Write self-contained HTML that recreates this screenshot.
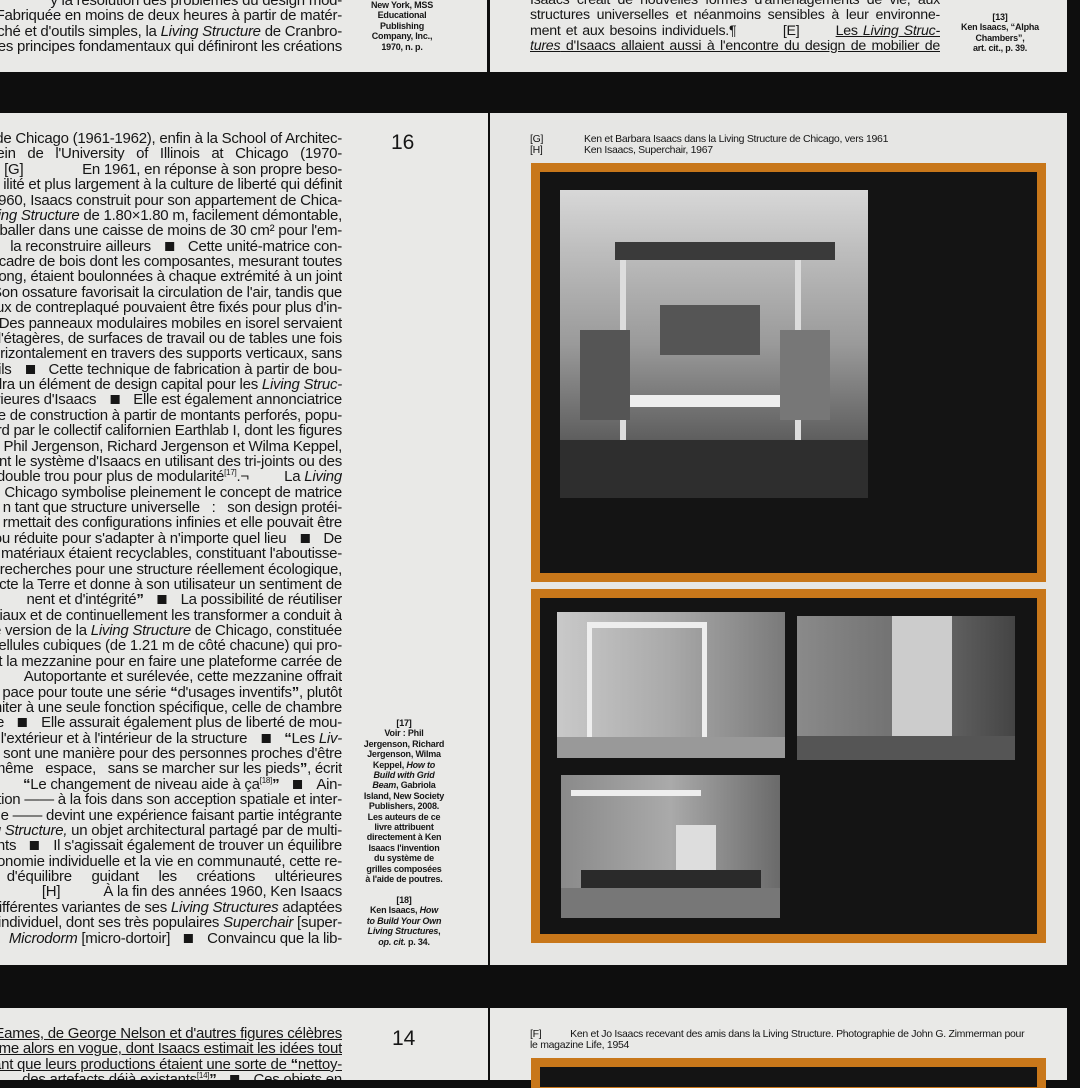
<!DOCTYPE html>
<html><head><meta charset="utf-8"><style>
*{margin:0;padding:0;box-sizing:border-box}
body{width:1080px;height:1080px;background:#0e0e0e;position:relative;overflow:hidden;font-family:"Liberation Sans",sans-serif;color:#161616}
.pg{position:absolute;background:#e9e9e7}
.col{position:absolute;overflow:hidden}
.col div{white-space:nowrap;font-size:15px;letter-spacing:-0.25px;height:15.38px;line-height:15.38px;width:max-content;position:relative;left:100%;transform:translateX(-100%)}
.col.j div{width:auto;left:0;transform:none;text-align:justify;text-align-last:justify;font-size:14.2px}
sup{font-size:8px;line-height:0;vertical-align:baseline;position:relative;top:-6px}
.sq{display:inline-block;width:9px;height:9px;background:#161616;margin:0 14px}
.note{position:absolute;font-size:9px;font-weight:bold;text-align:center;line-height:10.4px;letter-spacing:-0.2px}
.or{position:absolute;background:#c8771a}
.bk{position:absolute;background:#141414}
.ph{position:absolute;background:#8a8a8a;overflow:hidden}
.u{text-decoration:underline}
</style></head><body>
<!-- top strip -->
<div class="pg" style="left:0;top:0;width:487px;height:72px"></div>
<div class="pg" style="left:490px;top:0;width:577px;height:72px"></div>
<div class="col" style="left:0;top:0;width:342px;height:56px">
<div style="margin-top:-7px">y la résolution des problèmes du design mod-</div>
<div>Fabriquée en moins de deux heures à partir de matér-</div>
<div>arché et d'outils simples, la <i>Living Structure</i> de Cranbro-</div>
<div>les principes fondamentaux qui définiront les créations</div>
</div>
<div class="note" style="left:360px;top:0;width:84px">New York, MSS<br>Educational<br>Publishing<br>Company, Inc.,<br>1970, n. p.</div>
<div class="col j" style="left:530px;top:0;width:410px;height:56px">
<div style="margin-top:-7px">Isaacs créait de nouvelles formes d'aménagements de vie, aux</div>
<div>structures universelles et néanmoins sensibles à leur environne-</div>
<div>ment et aux besoins individuels.¶ &nbsp; &nbsp; &nbsp; &nbsp; [E] &nbsp; &nbsp; &nbsp; <span class="u">Les <i>Living Struc-</i></span></div>
<div class="u"><i>tures</i> d'Isaacs allaient aussi à l'encontre du design de mobilier de</div>
</div>
<div class="note" style="left:952px;top:12px;width:96px">[13]<br>Ken Isaacs, “Alpha<br>Chambers”,<br>art. cit., p. 39.</div>

<!-- middle spread -->
<div class="pg" style="left:0;top:113px;width:488px;height:852px"></div>
<div class="pg" style="left:490px;top:113px;width:577px;height:852px;background:#e6e6e4"></div>
<div style="position:absolute;left:391px;top:131px;font-size:21px">16</div>
<div class="col" style="left:0;top:131px;width:342px;height:820px">
<div>ty de Chicago (1961-1962), enfin à la School of Architec-</div>
<div>sein &nbsp; de &nbsp; l'University &nbsp; of &nbsp; Illinois &nbsp; at &nbsp; Chicago &nbsp; (1970-</div>
<div>[G] &nbsp; &nbsp; &nbsp; &nbsp; &nbsp; &nbsp; &nbsp; En 1961, en réponse à son propre beso-</div>
<div>ilité et plus largement à la culture de liberté qui définit</div>
<div>s 1960, Isaacs construit pour son appartement de Chica-</div>
<div><i>iving Structure</i> de 1.80×1.80 m, facilement démontable,</div>
<div>t emballer dans une caisse de moins de 30 cm² pour l'em-</div>
<div>la reconstruire ailleurs<span class="sq"></span>Cette unité-matrice con-</div>
<div>un cadre de bois dont les composantes, mesurant toutes</div>
<div>long, étaient boulonnées à chaque extrémité à un joint</div>
<div>Son ossature favorisait la circulation de l'air, tandis que</div>
<div>eaux de contreplaqué pouvaient être fixés pour plus d'in-</div>
<div>é &nbsp; &nbsp; Des panneaux modulaires mobiles en isorel servaient</div>
<div>d'étagères, de surfaces de travail ou de tables une fois</div>
<div>orizontalement en travers des supports verticaux, sans</div>
<div>uils<span class="sq"></span>Cette technique de fabrication à partir de bou-</div>
<div>endra un élément de design capital pour les <i>Living Struc-</i></div>
<div>rieures d'Isaacs<span class="sq"></span>Elle est également annonciatrice</div>
<div>ue de construction à partir de montants perforés, popu-</div>
<div>-tard par le collectif californien Earthlab I, dont les figures</div>
<div>s Phil Jergenson, Richard Jergenson et Wilma Keppel,</div>
<div>eront le système d'Isaacs en utilisant des tri-joints ou des</div>
<div>double trou pour plus de modularité<sup>[17]</sup>.¬ &nbsp; &nbsp; &nbsp; &nbsp; La <i>Living</i></div>
<div>e de Chicago symbolise pleinement le concept de matrice</div>
<div>n tant que structure universelle &nbsp; : &nbsp; son design protéi-</div>
<div>rmettait des configurations infinies et elle pouvait être</div>
<div>ou réduite pour s'adapter à n'importe quel lieu<span class="sq"></span>De</div>
<div>les matériaux étaient recyclables, constituant l'aboutisse-</div>
<div>s recherches pour une structure réellement écologique,</div>
<div>ecte la Terre et donne à son utilisateur un sentiment de</div>
<div>nent et d'intégrité<b>”</b><span class="sq"></span>La possibilité de réutiliser</div>
<div>iaux et de continuellement les transformer a conduit à</div>
<div>ème version de la <i>Living Structure</i> de Chicago, constituée</div>
<div>s cellules cubiques (de 1.21 m de côté chacune) qui pro-</div>
<div>t la mezzanine pour en faire une plateforme carrée de</div>
<div>&nbsp; &nbsp; Autoportante et surélevée, cette mezzanine offrait</div>
<div>pace pour toute une série <b>“</b>d'usages inventifs<b>”</b>, plutôt</div>
<div>limiter à une seule fonction spécifique, celle de chambre</div>
<div>ble<span class="sq"></span>Elle assurait également plus de liberté de mou-</div>
<div>l'extérieur et à l'intérieur de la structure<span class="sq"></span><b>“</b>Les <i>Liv-</i></div>
<div><i>ures</i> sont une manière pour des personnes proches d'être</div>
<div>même &nbsp; espace, &nbsp; sans se marcher sur les pieds<b>”</b>, écrit</div>
<div><b>“</b>Le changement de niveau aide à ça<sup>[18]</sup><b>”</b><span class="sq"></span>Ain-</div>
<div>ation —— à la fois dans son acception spatiale et inter-</div>
<div>le —— devint une expérience faisant partie intégrante</div>
<div><i>ng Structure,</i> un objet architectural partagé par de multi-</div>
<div>ants<span class="sq"></span>Il s'agissait également de trouver un équilibre</div>
<div>tonomie individuelle et la vie en communauté, cette re-</div>
<div>d'équilibre &nbsp; &nbsp; guidant &nbsp; &nbsp; les &nbsp; &nbsp; créations &nbsp; &nbsp; ultérieures</div>
<div>[H] &nbsp; &nbsp; &nbsp; &nbsp; &nbsp; À la fin des années 1960, Ken Isaacs</div>
<div>e différentes variantes de ses <i>Living Structures</i> adaptées</div>
<div>individuel, dont ses très populaires <i>Superchair</i> [super-</div>
<div><i>Microdorm</i> [micro-dortoir]<span class="sq"></span>Convaincu que la lib-</div>
</div>
<div class="note" style="left:354px;top:718px;width:100px">[17]<br>Voir : Phil<br>Jergenson, Richard<br>Jergenson, Wilma<br>Keppel, <i>How to<br>Build with Grid<br>Beam</i>, Gabriola<br>Island, New Society<br>Publishers, 2008.<br>Les auteurs de ce<br>livre attribuent<br>directement à Ken<br>Isaacs l'invention<br>du système de<br>grilles composées<br>à l'aide de poutres.<br><br>[18]<br>Ken Isaacs, <i>How<br>to Build Your Own<br>Living Structures</i>,<br><i>op. cit.</i> p. 34.</div>

<div style="position:absolute;left:530px;top:134px;font-size:10.5px;line-height:11px;letter-spacing:-0.3px">[G]<br>[H]</div>
<div style="position:absolute;left:584px;top:134px;font-size:10.5px;line-height:11px;letter-spacing:-0.3px">Ken et Barbara Isaacs dans la Living Structure de Chicago, vers 1961<br>Ken Isaacs, Superchair, 1967</div>

<div class="or" style="left:531px;top:163px;width:515px;height:419px"></div>
<div class="bk" style="left:540px;top:172px;width:497px;height:401px"></div>
<div class="ph" style="left:560px;top:190px;width:308px;height:308px;background:linear-gradient(#d8d8d8 0%,#bdbdbd 20%,#9a9a9a 50%,#6a6a6a 75%,#3a3a3a 100%)">
 <div style="position:absolute;left:55px;top:52px;width:220px;height:18px;background:#3a3a3a"></div>
 <div style="position:absolute;left:60px;top:70px;width:6px;height:190px;background:#ddd"></div>
 <div style="position:absolute;left:235px;top:70px;width:6px;height:190px;background:#ddd"></div>
 <div style="position:absolute;left:100px;top:115px;width:100px;height:50px;background:#555"></div>
 <div style="position:absolute;left:40px;top:205px;width:230px;height:12px;background:#eee"></div>
 <div style="position:absolute;left:20px;top:140px;width:50px;height:90px;background:#555"></div>
 <div style="position:absolute;left:220px;top:140px;width:50px;height:90px;background:#777"></div>
 <div style="position:absolute;left:0;top:250px;width:308px;height:58px;background:#2e2e2e"></div>
</div>

<div class="or" style="left:531px;top:589px;width:515px;height:354px"></div>
<div class="bk" style="left:540px;top:598px;width:497px;height:336px"></div>
<div class="ph" style="left:557px;top:612px;width:228px;height:146px;background:linear-gradient(90deg,#c9c9c9,#a9a9a9 50%,#7a7a7a)">
 <div style="position:absolute;left:30px;top:10px;width:120px;height:6px;background:#eee"></div>
 <div style="position:absolute;left:30px;top:10px;width:5px;height:120px;background:#eee"></div>
 <div style="position:absolute;left:145px;top:10px;width:5px;height:120px;background:#eee"></div>
 <div style="position:absolute;left:0;top:125px;width:228px;height:21px;background:#999"></div>
</div>
<div class="ph" style="left:797px;top:616px;width:218px;height:144px;background:linear-gradient(90deg,#8a8a8a,#6a6a6a 60%,#444)">
 <div style="position:absolute;left:95px;top:0;width:60px;height:130px;background:#ccc"></div>
 <div style="position:absolute;left:0;top:120px;width:218px;height:24px;background:#555"></div>
</div>
<div class="ph" style="left:561px;top:775px;width:219px;height:143px;background:linear-gradient(90deg,#8a8a8a,#aaa 50%,#6a6a6a)">
 <div style="position:absolute;left:10px;top:15px;width:130px;height:6px;background:#eee"></div>
 <div style="position:absolute;left:115px;top:50px;width:40px;height:45px;background:#ddd"></div>
 <div style="position:absolute;left:20px;top:95px;width:180px;height:18px;background:#2a2a2a"></div>
 <div style="position:absolute;left:0;top:113px;width:219px;height:30px;background:#777"></div>
</div>

<!-- bottom strip -->
<div class="pg" style="left:0;top:1008px;width:488px;height:72px"></div>
<div class="pg" style="left:490px;top:1008px;width:577px;height:72px"></div>
<div style="position:absolute;left:392px;top:1027px;font-size:21px">14</div>
<div class="col" style="left:0;top:1026px;width:342px;height:54px">
<div class="u">arles Eames, de George Nelson et d'autres figures célèbres</div>
<div class="u">nisme alors en vogue, dont Isaacs estimait les idées tout</div>
<div class="u">érant que leurs productions étaient une sorte de <b>“</b>nettoy-</div>
<div>des artefacts déjà existants<sup>[14]</sup><b>”</b><span class="sq"></span>Ces objets en</div>
</div>
<div style="position:absolute;left:530px;top:1029px;font-size:10.5px;line-height:11px;letter-spacing:-0.3px">[F] &nbsp; &nbsp; &nbsp; &nbsp; &nbsp; Ken et Jo Isaacs recevant des amis dans la Living Structure. Photographie de John G. Zimmerman pour<br>le magazine Life, 1954</div>
<div class="or" style="left:531px;top:1058px;width:515px;height:30px"></div>
<div class="bk" style="left:540px;top:1067px;width:497px;height:20px"></div>
</body></html>
